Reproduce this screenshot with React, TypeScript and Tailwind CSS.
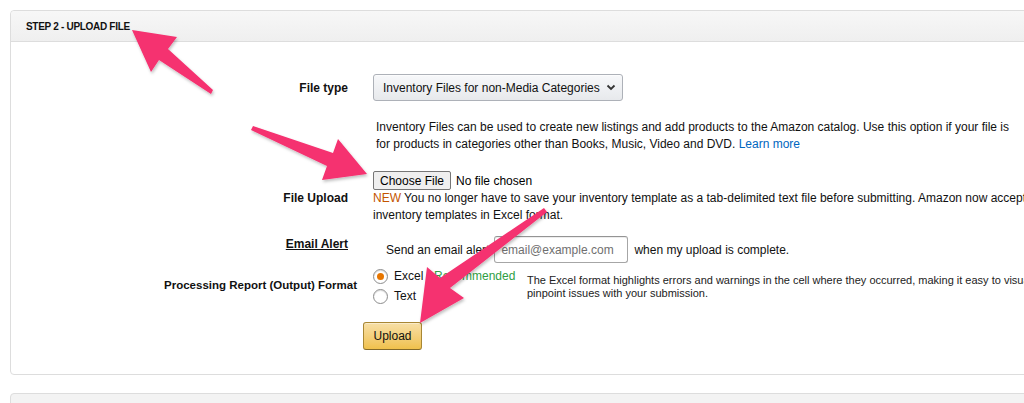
import React from "react";

const pink = "#f5306f";

function Arrows() {
  return (
    <svg className="absolute inset-0 pointer-events-none" width="1024" height="403" viewBox="0 0 1024 403">
      <defs>
        <filter id="sh" x="-20%" y="-20%" width="140%" height="140%">
          <feDropShadow dx="1" dy="2" stdDeviation="1.5" floodColor="#000" floodOpacity="0.25" />
        </filter>
      </defs>
      <g fill={pink} filter="url(#sh)">
        {/* to the header title */}
        <polygon points="132,30 177,37 168,49 213,90 211,94 159,60 151,72" />
        {/* to Choose File */}
        <polygon points="367,174 322,180 327,166 251,130 253,126 333,153 338,139" />
        {/* to Upload */}
        <polygon points="420,323 427,267 440,278 544,208 547,212 450,288 464,298" />
      </g>
    </svg>
  );
}

function Radio({ checked }: { checked?: boolean }) {
  return (
    <span className="w-[15px] h-[15px] rounded-full border border-[#8d8d8d] bg-white flex items-center justify-center shadow-[inset_0_1px_1px_rgba(0,0,0,0.15)]">
      {checked && <span className="w-[7px] h-[7px] rounded-full bg-[#e77600]" />}
    </span>
  );
}

export default function App() {
  const label = "w-[337px] shrink-0 text-right font-bold text-[12px] text-[#111]";
  return (
    <div className="relative w-[1024px] h-[403px] overflow-hidden bg-white font-['Liberation_Sans',Arial,sans-serif] text-[#111]">
      <div className="ml-[10px] mt-[10px] w-[1060px] border border-[#dddddd] rounded-[4px]">
        {/* Header */}
        <div className="h-[31px] bg-gradient-to-b from-[#f7f7f7] to-[#efefef] border-b border-[#dddddd] rounded-t-[4px] flex items-center pl-[15px]">
          <span className="text-[10px] font-bold tracking-[-0.3px] text-[#111]">STEP 2 - UPLOAD FILE</span>
        </div>

        <div className="pt-[32px] pb-[24px]">
          {/* File type */}
          <div className="flex items-center h-[27px]">
            <div className={label}>File type</div>
            <div className="ml-[25px] h-[27px] w-[250px] shrink-0 flex items-center justify-between pl-[9px] pr-[6px] rounded-[3px] border border-[#adb1b8] bg-gradient-to-b from-[#f7f8fa] to-[#e7e9ec] shadow-[0_1px_0_rgba(255,255,255,0.6)_inset]">
              <span className="text-[12px] text-[#111] whitespace-nowrap">Inventory Files for non-Media Categories</span>
              <svg width="10" height="7" viewBox="0 0 10 7" className="shrink-0">
                <path d="M1.5 1.5 L5 5 L8.5 1.5" fill="none" stroke="#333" strokeWidth="1.8" />
              </svg>
            </div>
          </div>

          {/* Description */}
          <div className="flex mt-[18px]">
            <div className="w-[337px] shrink-0" />
            <div className="ml-[28px] text-[12px] leading-[17px] whitespace-nowrap">
              <div>Inventory Files can be used to create new listings and add products to the Amazon catalog. Use this option if your file is</div>
              <div>
                for products in categories other than Books, Music, Video and DVD.{" "}
                <span className="text-[#0066c0]">Learn more</span>
              </div>
            </div>
          </div>

          {/* File upload */}
          <div className="flex items-center mt-[18px]">
            <div className={label}>File Upload</div>
            <div className="ml-[25px] flex flex-col">
              <div className="flex items-center h-[19px]">
                <span className="h-[19px] px-[6px] flex items-center text-[12px] bg-[#efefef] border border-[#767676] rounded-[2px] text-black">
                  Choose File
                </span>
                <span className="ml-[5px] text-[12px] text-black">No file chosen</span>
              </div>
              <div className="text-[12px] leading-[17px] whitespace-nowrap">
                <div>
                  <span className="text-[#c45500]">NEW</span> You no longer have to save your inventory template as a tab-delimited text file before submitting. Amazon now accepts
                </div>
                <div>inventory templates in Excel format.</div>
              </div>
            </div>
          </div>

          {/* Email alert */}
          <div className="flex items-start mt-[12px]">
            <div className={label + " leading-[17px]"}>
              <span className="underline">Email Alert</span>
            </div>
            <div className="ml-[38px] flex items-center h-[27px] text-[12px] whitespace-nowrap">
              <span>Send an email alert</span>
              <span className="ml-[5px] h-[27px] w-[134px] shrink-0 flex items-center px-[6px] border border-[#a6a6a6] border-t-[#949494] rounded-[3px] shadow-[inset_0_1px_0_rgba(0,0,0,0.07)] text-[#6f6f6f]">
                email@example.com
              </span>
              <span className="ml-[6px]">when my upload is complete.</span>
            </div>
          </div>

          {/* Processing report */}
          <div className="flex items-center mt-[3px]">
            <div className="w-[346px] shrink-0 text-right font-bold text-[11.5px] text-[#111]">Processing Report (Output) Format</div>
            <div className="ml-[16px] flex items-start">
              <div className="w-[154px] shrink-0 flex flex-col text-[12px]">
                <div className="flex items-center h-[20px] gap-[6px]">
                  <Radio checked />
                  <span className="whitespace-nowrap">
                    Excel - <span className="text-[#2f9e44]">Recommended</span>
                  </span>
                </div>
                <div className="flex items-center h-[20px] gap-[6px]">
                  <Radio />
                  <span>Text</span>
                </div>
              </div>
              <div className="mt-[8px] text-[11px] leading-[13px] text-[#222] whitespace-nowrap">
                <div>The Excel format highlights errors and warnings in the cell where they occurred, making it easy to visually</div>
                <div>pinpoint issues with your submission.</div>
              </div>
            </div>
          </div>

          {/* Upload */}
          <div className="flex mt-[16px]">
            <div className="w-[337px] shrink-0" />
            <button className="ml-[15px] h-[28px] w-[59px] rounded-[3px] border border-[#a88734] border-b-[#846a29] bg-gradient-to-b from-[#f7dfa5] to-[#f0c14b] text-[12px] text-[#111] shadow-[inset_0_1px_0_rgba(255,255,255,0.4)]">
              Upload
            </button>
          </div>
        </div>
      </div>

      {/* Next card */}
      <div className="ml-[10px] mt-[18px] w-[1060px] h-[40px] border border-[#dddddd] rounded-t-[4px] bg-[#f3f3f3]" />

      <Arrows />
    </div>
  );
}
